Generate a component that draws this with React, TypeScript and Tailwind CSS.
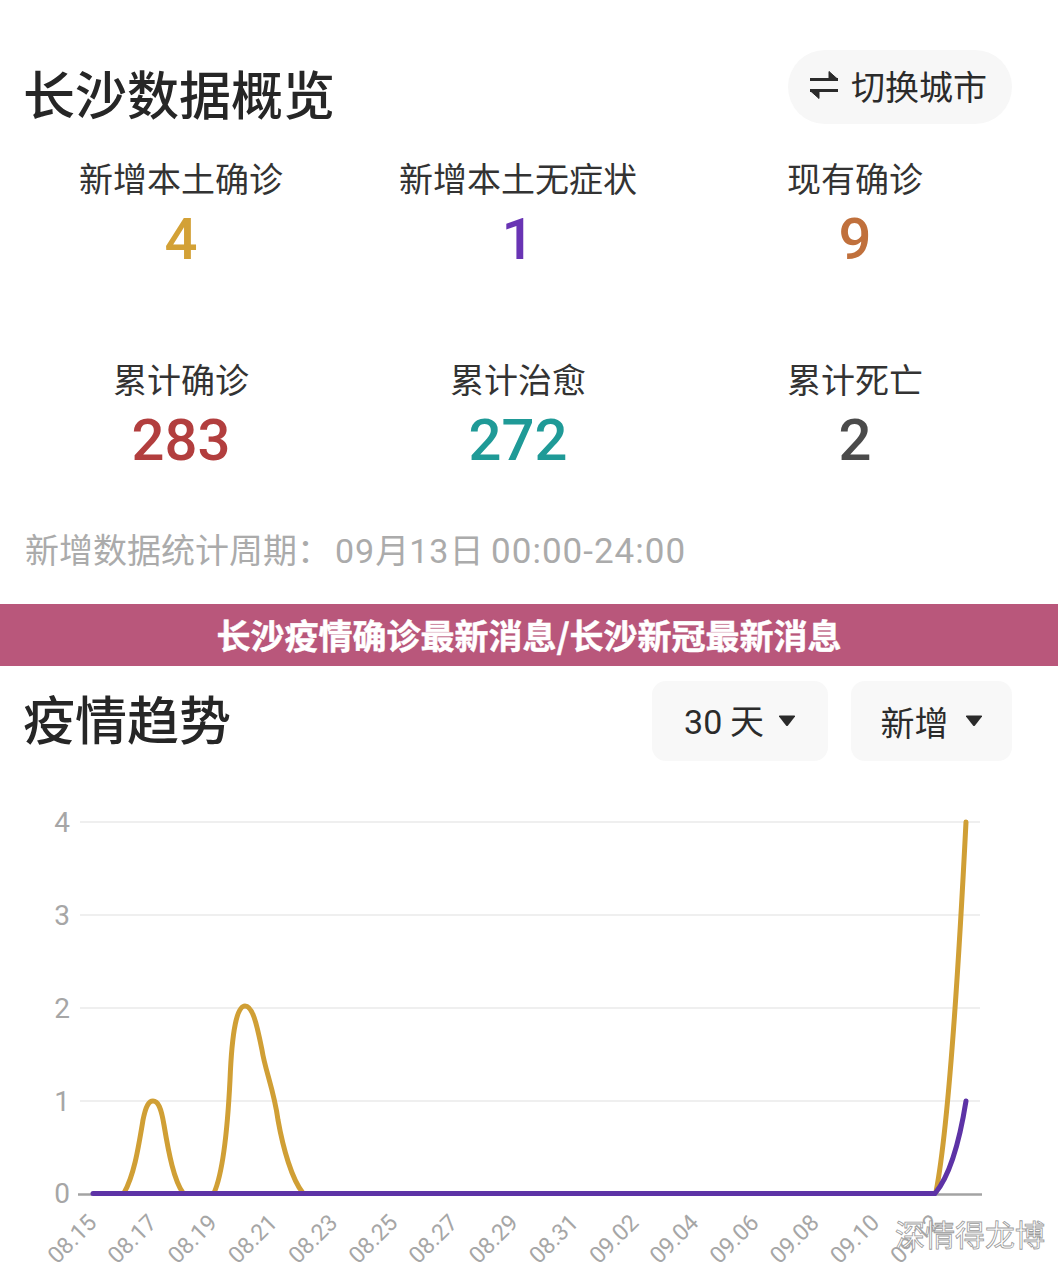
import React from 'react';

const CJK = "font-['Noto_Sans_CJK_SC','Noto_Sans',sans-serif]";

const STATS = [
  { label: '新增本土确诊', value: '4', color: 'text-[#d3a136]' },
  { label: '新增本土无症状', value: '1', color: 'text-[#6934b4]' },
  { label: '现有确诊', value: '9', color: 'text-[#c0703c]' },
  { label: '累计确诊', value: '283', color: 'text-[#b23e3e]' },
  { label: '累计治愈', value: '272', color: 'text-[#1f9a97]' },
  { label: '累计死亡', value: '2', color: 'text-[#4b4b4b]' },
];

const Y_TICKS = [
  { label: '4', y: 42 },
  { label: '3', y: 135 },
  { label: '2', y: 228 },
  { label: '1', y: 321 },
];

const X_LABELS = ['08.15', '08.17', '08.19', '08.21', '08.23', '08.25', '08.27', '08.29', '08.31', '09.02', '09.04', '09.06', '09.08', '09.10', '09.12'];

const Caret = () => (
  <svg width="18" height="12" viewBox="0 0 18 12" className="shrink-0">
    <path d="M1 1.5 Q0.5 0.5 2 0.5 H16 Q17.5 0.5 17 1.5 L10 10.5 Q9 11.5 8 10.5 Z" fill="#2b2b2b" />
  </svg>
);

const TrendChart = () => (
  // y coordinates are relative to the chart top (780 on the page)
  <svg width="1058" height="490" viewBox="0 0 1058 490" className="block">
    {Y_TICKS.map(t => (
      <g key={t.label}>
        <line x1="80" x2="980" y1={t.y} y2={t.y} stroke="#efefef" strokeWidth="2" />
        <text x="62" y={t.y + 10} textAnchor="middle" fontFamily="Roboto, sans-serif" fontSize="28" fill="#a6a6a6">{t.label}</text>
      </g>
    ))}
    <text x="62" y="423" textAnchor="middle" fontFamily="Roboto, sans-serif" fontSize="28" fill="#a6a6a6">0</text>
    <line x1="78" x2="982" y1="414.5" y2="414.5" stroke="#a3a3a3" strokeWidth="2.5" />

    {X_LABELS.map((l, i) => {
      const x = 98 + i * 60.2;
      return (
        <text key={l} x={x} y="444" textAnchor="end" transform={`rotate(-45 ${x} 444)`} fontFamily="Roboto, sans-serif" fontSize="23" fill="#a6a6a6">{l}</text>
      );
    })}

    <g fill="none" stroke="#d09f35" strokeWidth="5" strokeLinecap="round">
      <path d="M124 413 C134 395 138 370 143 340 C146 325 149 321 153 321 C158 321 161 327 164 345 C169 375 174 400 183 413" />
      <path d="M214 413 C222 395 227 360 230 300 C232 250 237 226 245 226 C252 226 256 240 262 270 C265 290 274 310 278 340 C283 368 292 400 303 413" />
      <path d="M936 412 C948 350 958 200 966 42" />
    </g>
    <path d="M93 413.5 H935 C948 398 959 365 966 321" fill="none" stroke="#5d33a6" strokeWidth="5" strokeLinecap="round" />

    <text x="895" y="466" fontFamily="'Noto Sans CJK SC', sans-serif" fontSize="30" fill="#ffffff" stroke="#9a9a9a" strokeWidth="0.8">深情得龙博</text>
  </svg>
);

export default function App() {
  return (
    <div className={`w-[1058px] h-[1270px] overflow-hidden bg-white ${CJK}`}>
      <div className="pt-[50px] pl-[23px] pr-[46px] flex items-center justify-between">
        <h1 className="h-[74px] text-[52px] leading-[86px] font-medium text-[#262626]">长沙数据概览</h1>
        <div className="w-[224px] h-[74px] pr-[4px] pb-[4px] rounded-full bg-[#f7f7f7] flex items-center justify-center gap-[12px] text-[34px] text-[#2b2b2b]">
          <svg width="30" height="30" viewBox="0 0 30 30" className="shrink-0">
            <path d="M1 9.5 H29 L20 1.5 V9.5" fill="#2b2b2b" stroke="#2b2b2b" strokeWidth="1" strokeLinejoin="round" />
            <path d="M1 8 H29 V11 H1 Z" fill="#2b2b2b" />
            <path d="M29 20.5 H1 L10 28.5 V20.5" fill="#2b2b2b" stroke="#2b2b2b" strokeWidth="1" strokeLinejoin="round" />
            <path d="M1 19 H29 V22 H1 Z" fill="#2b2b2b" />
          </svg>
          <span>切换城市</span>
        </div>
      </div>

      <div className="mt-[30px] ml-[12.5px] w-[1011px] grid grid-cols-3 gap-y-[79px]">
        {STATS.map(s => (
          <div key={s.label} className="flex flex-col items-center">
            <div className="text-[34px] leading-[48px] text-[#333333]">{s.label}</div>
            <div className={`font-['Roboto',sans-serif] text-[58px] leading-[74px] font-medium ${s.color}`}>{s.value}</div>
          </div>
        ))}
      </div>

      <div className="mt-[48px] pl-[25px] text-[34px] leading-[48px] text-[#ababab]">
        新增数据统计周期：<span className="ml-[4px] font-['Roboto',sans-serif] tracking-[1px]">09</span>月<span className="font-['Roboto',sans-serif] tracking-[1px]">13</span>日 <span className="font-['Roboto',sans-serif] text-[35px] tracking-[1px]">00:00-24:00</span>
      </div>

      <div className="mt-[28px] h-[62px] pb-[2px] bg-[#b9577b] flex items-center justify-center text-[34px] font-bold text-white [-webkit-text-stroke:0.5px_white]">
        长沙疫情确诊最新消息/长沙新冠最新消息
      </div>

      <div className="mt-[15px] pl-[23px] pr-[46px] flex items-center justify-between">
        <h2 className="h-[80px] text-[52px] leading-[74px] font-medium text-[#262626]">疫情趋势</h2>
        <div className="flex gap-[23px]">
          <div className="w-[176px] h-[80px] rounded-[14px] bg-[#f8f8f8] flex items-center justify-center gap-[14px] text-[34px] text-[#2b2b2b]">
            <span><span className="font-['Roboto',sans-serif]">30</span> 天</span>
            <Caret />
          </div>
          <div className="w-[161px] h-[80px] rounded-[14px] bg-[#f8f8f8] flex items-center justify-center gap-[16px] text-[34px] text-[#2b2b2b]">
            <span>新增</span>
            <Caret />
          </div>
        </div>
      </div>

      <div className="mt-[19px]">
        <TrendChart />
      </div>
    </div>
  );
}
